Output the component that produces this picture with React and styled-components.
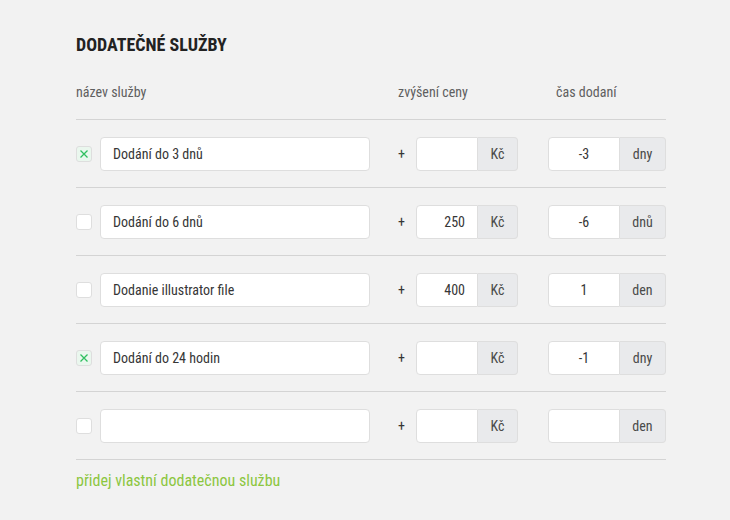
import React from 'react';
import styled, { createGlobalStyle } from 'styled-components';

const COLORS = {
  page: '#f2f2f2',
  text: '#363636',
  muted: '#5f5f5f',
  line: '#d4d4d4',
  border: '#dedede',
  addon: '#e9eaec',
  green: '#8cc63f',
  check: '#2fbf5f',
};

const FONT = `"Roboto Condensed", "Liberation Sans Narrow", "DejaVu Sans Condensed", Roboto, sans-serif`;

const GlobalStyle = createGlobalStyle`
  body {
    margin: 0;
    background: ${COLORS.page};
    font-family: ${FONT};
    color: ${COLORS.text};
  }
`;

const services = [
  { checked: true, name: 'Dodání do 3 dnů', price: '', time: '-3', unit: 'dny' },
  { checked: false, name: 'Dodání do 6 dnů', price: '250', time: '-6', unit: 'dnů' },
  { checked: false, name: 'Dodanie illustrator file', price: '400', time: '1', unit: 'den' },
  { checked: true, name: 'Dodání do 24 hodin', price: '', time: '-1', unit: 'dny' },
  { checked: false, name: '', price: '', time: '', unit: 'den' },
];

const Checkbox = ({ checked }) => (
  <Box $checked={checked}>
    {checked && (
      <svg width="10" height="10" viewBox="0 0 10 10">
        <path d="M1.5 1.5 L8.5 8.5 M8.5 1.5 L1.5 8.5" stroke={COLORS.check} strokeWidth="1.3" />
      </svg>
    )}
  </Box>
);

const App = () => (
  <>
    <GlobalStyle />
    <Page>
      <Title>DODATEČNÉ SLUŽBY</Title>
      <Header>
        <HeadLabel>název služby</HeadLabel>
        <HeadLabel>zvýšení ceny</HeadLabel>
        <HeadLabel>čas dodaní</HeadLabel>
      </Header>
      {services.map((s, i) => (
        <Row key={i}>
          <Checkbox checked={s.checked} />
          <NameInput>{s.name}</NameInput>
          <Plus>+</Plus>
          <Group>
            <NumberField $width={62}>{s.price}</NumberField>
            <Addon $width={40}>Kč</Addon>
          </Group>
          <Group>
            <NumberField $width={72} $center>{s.time}</NumberField>
            <Addon $width={46}>{s.unit}</Addon>
          </Group>
        </Row>
      ))}
      <AddLink>přidej vlastní dodatečnou službu</AddLink>
    </Page>
  </>
);

const Page = styled.div`
  width: 590px;
  padding: 33px 0 0 76px;
`;

const Title = styled.h2`
  margin: 0;
  font-size: 18px;
  line-height: 24px;
  font-weight: 700;
  color: #222;
`;

const Header = styled.div`
  display: grid;
  grid-template-columns: 322px 158px 1fr;
  padding: 25px 0 17px;
  border-bottom: 1px solid ${COLORS.line};
`;

const HeadLabel = styled.div`
  font-size: 14px;
  line-height: 20px;
  color: ${COLORS.muted};
`;

const Row = styled.div`
  display: flex;
  align-items: center;
  height: 67px;
  border-bottom: 1px solid ${COLORS.line};
`;

const Box = styled.div`
  flex-shrink: 0;
  width: 14px;
  height: 14px;
  border: 1px solid ${COLORS.border};
  border-radius: 3px;
  background: ${(p) => (p.$checked ? '#eaf7ee' : '#fff')};
  display: flex;
  align-items: center;
  justify-content: center;
  margin-right: 8px;
`;

const Field = styled.div`
  flex-shrink: 0;
  box-sizing: border-box;
  height: 34px;
  background: #fff;
  border: 1px solid ${COLORS.border};
  font-size: 14px;
  line-height: 32px;
  color: ${COLORS.text};
`;

const NameInput = styled(Field)`
  width: 270px;
  padding: 0 6px 0 12px;
  border-radius: 4px;
`;

const Plus = styled.span`
  flex-shrink: 0;
  width: 46px;
  box-sizing: border-box;
  padding-right: 11px;
  text-align: right;
  font-size: 14px;
  color: ${COLORS.text};
`;

const Group = styled.div`
  display: flex;
  flex-shrink: 0;
  & + & {
    margin-left: 30px;
  }
`;

const NumberField = styled(Field)`
  width: ${(p) => p.$width}px;
  padding: ${(p) => (p.$center ? '0' : '0 12px 0 0')};
  text-align: ${(p) => (p.$center ? 'center' : 'right')};
  border-radius: 4px 0 0 4px;
`;

const Addon = styled(Field)`
  width: ${(p) => p.$width}px;
  border-left: none;
  background: ${COLORS.addon};
  border-radius: 0 4px 4px 0;
  text-align: center;
  color: #4a4a4a;
`;

const AddLink = styled.a`
  display: inline-block;
  margin-top: 11px;
  font-size: 16px;
  line-height: 20px;
  color: ${COLORS.green};
  cursor: pointer;
`;

export default App;
